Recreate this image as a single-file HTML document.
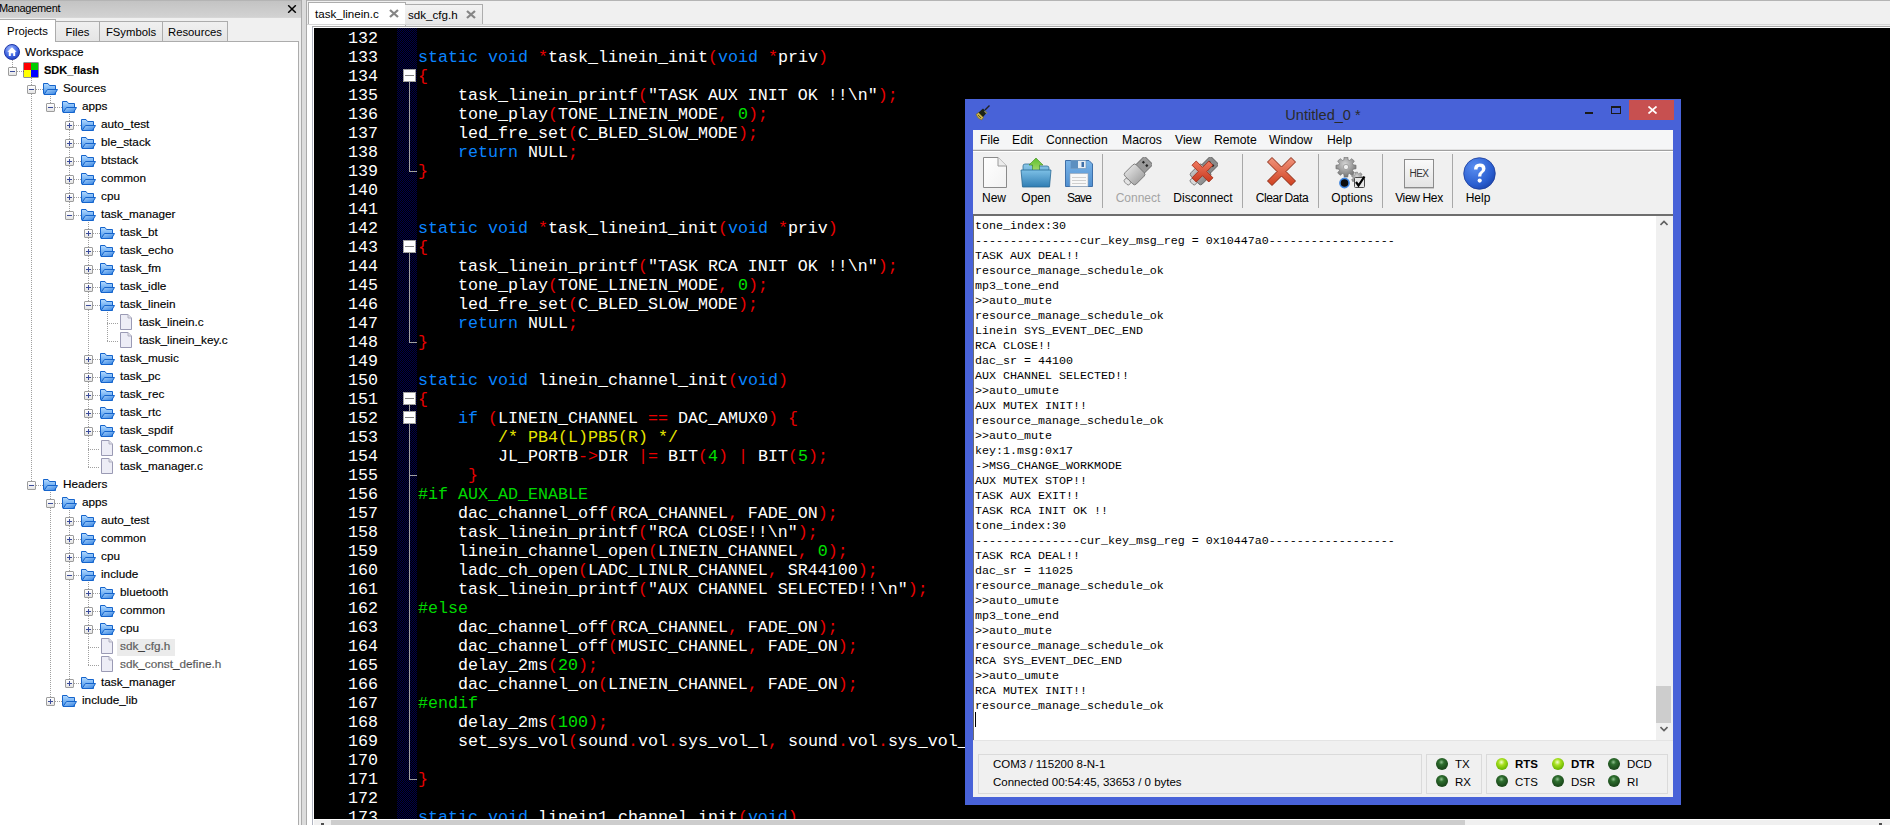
<!DOCTYPE html>
<html><head><meta charset="utf-8">
<style>
*{margin:0;padding:0;box-sizing:border-box}
html,body{width:1890px;height:825px;overflow:hidden;background:#f0f0f0;font-family:"Liberation Sans",sans-serif;color:#000}
.a{position:absolute}
/* left panel */
#lp{position:absolute;left:0;top:0;width:301px;height:825px;background:#f0f0f0;overflow:hidden}
#lph{position:absolute;left:0;top:0;width:301px;height:18px;background:linear-gradient(#b4b4b4 0,#b4b4b4 1px,#c3c3c3 1px,#d2d2d2 17px,#dadada 18px)}
#lph .t{position:absolute;left:-1px;top:1px;font-size:11px;line-height:14px;letter-spacing:-0.3px}
#lph .x{position:absolute;left:287px;top:5px;width:10px;height:8px}
.tab{position:absolute;top:21px;height:21px;border:1px solid #acacac;border-bottom:none;background:linear-gradient(#f0f0f0,#e4e4e4);font-size:11.3px;line-height:20px;text-align:center}
.tab.on{top:19px;height:23px;line-height:22px;background:#fff;z-index:2;border-left:none}
#tree{position:absolute;left:0;top:41px;width:299px;height:784px;background:#fff;border-top:1px solid #acacac;border-right:1px solid #acacac;overflow:hidden}
#tree .in{position:absolute;left:0;top:-42px;width:299px;height:825px}
.tt{position:absolute;font-size:11.75px;line-height:18px;white-space:pre;color:#000;-webkit-text-stroke:0.15px #000}
.tt.b{font-weight:bold;font-size:11px}
.tt.g{color:#6d6d6d}
.sel{position:absolute;background:#ebebeb}
.ic{position:absolute}
.dv{position:absolute;width:1px;background:repeating-linear-gradient(#a0a0a0 0 1px,transparent 1px 2px)}
.dh{position:absolute;height:1px;background:repeating-linear-gradient(90deg,#a0a0a0 0 1px,transparent 1px 2px)}
.exp{position:absolute;width:9px;height:9px;border:1px solid #9d9d9d;border-radius:1px;background:linear-gradient(#fff,#e4e4e4)}
.exp .eh{position:absolute;left:1px;top:3px;width:5px;height:1px;background:#3b4c9b}
.exp .ev{position:absolute;left:3px;top:1px;width:1px;height:5px;background:#3b4c9b}
/* splitter */
#sp{position:absolute;left:301px;top:0;width:6px;height:825px;background:#dcdcdc;border-left:1px solid #aaa;border-right:1px solid #aaa}
/* editor */
#ed{position:absolute;left:307px;top:0;width:1583px;height:825px;background:#f0f0f0}
#edtop{position:absolute;left:0;top:0;width:1583px;height:1px;background:#b4b4b4}
.etab{position:absolute;font-size:11.6px;line-height:20px;white-space:pre}
#code{position:absolute;left:314px;top:28px;width:1576px;height:791px;background:#000;overflow:hidden}
#codefr{position:absolute;left:312px;top:26px;width:1578px;height:799px;border-left:1px solid #b0b4c0;border-top:1px solid #a8a8a8;background:#fff}
#margin{position:absolute;left:397px;top:28px;width:20px;height:791px;background:repeating-conic-gradient(#00004c 0 25%,#000 0 50%) 0 0/2px 2px}
.ln{position:absolute;left:313px;width:65px;text-align:right;font-family:"Liberation Mono",monospace;font-size:16.67px;line-height:19px;color:#fff;white-space:pre}
.cl{position:absolute;left:418px;font-family:"Liberation Mono",monospace;font-size:16.67px;line-height:19px;color:#fff;white-space:pre}
.kw{color:#0a84ff}.op{color:#e80000}.nu{color:#00e000}.pp{color:#00d800}.cm{color:#e6e600}
.fb{position:absolute;left:403px;width:13px;height:13px;background:#fff;border:1px solid #a0a0a0}
.fb i{position:absolute;left:1px;top:5px;width:9px;height:1px;background:#808080}
.fv{position:absolute;left:409px;width:1px;background:#a0a0a0}
.ft{position:absolute;left:409px;width:8px;height:1px;background:#a0a0a0}
#hsb{position:absolute;left:314px;top:820px;width:1576px;height:5px;background:#f0f0f0}
/* terminal window */
#win{position:absolute;left:965px;top:99px;width:716px;height:706px;background:#4862d8}
#wtitle{position:absolute;left:0;top:7px;width:716px;text-align:center;font-size:14.6px;line-height:18px;color:#2a2a2a}
#wclose{position:absolute;left:664px;top:1px;width:45px;height:20px;background:#c75050}
#client{position:absolute;left:8px;top:31px;width:700px;height:667px;background:#f0f0f0;overflow:hidden}
#menu{position:absolute;left:0;top:0;width:700px;height:20px;background:#f5f6f7;border-bottom:1px solid #e1e1e1}
#menu span{position:absolute;top:2px;font-size:12.2px;line-height:16px}
#tbar{position:absolute;left:0;top:20px;width:700px;height:64px;background:#f0f0f0;border-top:1px solid #a0a0a0;box-shadow:inset 0 1px 0 #fff}
.tbl{position:absolute;top:39px;font-size:12px;line-height:16px;white-space:pre}
.tsep{position:absolute;top:3px;width:1px;height:54px;background:#a8a8a8}
#txt{position:absolute;left:0;top:84px;width:700px;height:526px;background:#fff;border-top:2px solid #6e6e6e;border-left:1px solid #6e6e6e}
#txt pre{position:absolute;left:1px;top:3px;font-family:"Liberation Mono",monospace;font-size:11.67px;line-height:15px;color:#000}
#vsb{position:absolute;left:683px;top:86px;width:17px;height:524px;background:#f0f0f0}
#stat{position:absolute;left:0;top:610px;width:700px;height:57px;background:#f0f0f0;border-top:1px solid #e4e4e4}
.sp{position:absolute;top:13px;height:40px;border:1px solid #dadada}
.st{position:absolute;font-size:11.5px;line-height:16px;white-space:pre;margin-top:-1px}
.led{position:absolute;width:12px;height:12px;border-radius:50%;background:radial-gradient(circle at 45% 35%,#8fc08f 0,#2e6e2e 25%,#1e4e1e 60%,#123a12 100%)}
.led.on{background:radial-gradient(circle at 45% 35%,#f4ffd0 0,#a8e020 30%,#6cb800 70%,#4a8a00 100%)}
</style></head><body>
<svg width="0" height="0" style="position:absolute">
<defs>
<linearGradient id="gf" x1="0" y1="0" x2="0" y2="1"><stop offset="0" stop-color="#b5dbff"/><stop offset="1" stop-color="#3b8ce8"/></linearGradient>
<linearGradient id="gf2" x1="0" y1="0" x2="1" y2="1"><stop offset="0" stop-color="#a9d2fb"/><stop offset="1" stop-color="#2f7fe0"/></linearGradient>
<radialGradient id="gws" cx="0.4" cy="0.3" r="0.8"><stop offset="0" stop-color="#9fb8ff"/><stop offset="0.6" stop-color="#3d63e0"/><stop offset="1" stop-color="#1d35b0"/></radialGradient>
</defs></svg>

<!-- LEFT PANEL -->
<div id="lp">
 <div id="lph"><div class="t">Management</div>
  <svg class="x" viewBox="0 0 10 8"><path d="M1.2 0.3 L8.8 7.7 M8.8 0.3 L1.2 7.7" stroke="#000" stroke-width="1.5"/></svg>
 </div>
 <div class="tab" style="left:55px;width:45px">Files</div>
 <div class="tab" style="left:99px;width:64px">FSymbols</div>
 <div class="tab" style="left:162px;width:66px">Resources</div>
 <div class="tab on" style="left:0;width:56px">Projects</div>
 <div id="tree"><div class="in">
<div class="dv" style="left:12px;top:60px;height:11px"></div>
<div class="dv" style="left:31px;top:78px;height:407px"></div>
<div class="dh" style="left:17px;top:71px;width:7px"></div>
<div class="dv" style="left:50px;top:96px;height:11px"></div>
<div class="dh" style="left:36px;top:89px;width:7px"></div>
<div class="dv" style="left:69px;top:114px;height:101px"></div>
<div class="dh" style="left:55px;top:107px;width:7px"></div>
<div class="dh" style="left:74px;top:125px;width:7px"></div>
<div class="dh" style="left:74px;top:143px;width:7px"></div>
<div class="dh" style="left:74px;top:161px;width:7px"></div>
<div class="dh" style="left:74px;top:179px;width:7px"></div>
<div class="dh" style="left:74px;top:197px;width:7px"></div>
<div class="dv" style="left:88px;top:222px;height:245px"></div>
<div class="dh" style="left:74px;top:215px;width:7px"></div>
<div class="dh" style="left:93px;top:233px;width:7px"></div>
<div class="dh" style="left:93px;top:251px;width:7px"></div>
<div class="dh" style="left:93px;top:269px;width:7px"></div>
<div class="dh" style="left:93px;top:287px;width:7px"></div>
<div class="dv" style="left:107px;top:312px;height:29px"></div>
<div class="dh" style="left:93px;top:305px;width:7px"></div>
<div class="dh" style="left:107px;top:323px;width:12px"></div>
<div class="dh" style="left:107px;top:341px;width:12px"></div>
<div class="dh" style="left:93px;top:359px;width:7px"></div>
<div class="dh" style="left:93px;top:377px;width:7px"></div>
<div class="dh" style="left:93px;top:395px;width:7px"></div>
<div class="dh" style="left:93px;top:413px;width:7px"></div>
<div class="dh" style="left:93px;top:431px;width:7px"></div>
<div class="dh" style="left:88px;top:449px;width:12px"></div>
<div class="dh" style="left:88px;top:467px;width:12px"></div>
<div class="dv" style="left:50px;top:492px;height:209px"></div>
<div class="dh" style="left:36px;top:485px;width:7px"></div>
<div class="dv" style="left:69px;top:510px;height:173px"></div>
<div class="dh" style="left:55px;top:503px;width:7px"></div>
<div class="dh" style="left:74px;top:521px;width:7px"></div>
<div class="dh" style="left:74px;top:539px;width:7px"></div>
<div class="dh" style="left:74px;top:557px;width:7px"></div>
<div class="dv" style="left:88px;top:582px;height:83px"></div>
<div class="dh" style="left:74px;top:575px;width:7px"></div>
<div class="dh" style="left:93px;top:593px;width:7px"></div>
<div class="dh" style="left:93px;top:611px;width:7px"></div>
<div class="dh" style="left:93px;top:629px;width:7px"></div>
<div class="dh" style="left:88px;top:647px;width:12px"></div>
<div class="dh" style="left:88px;top:665px;width:12px"></div>
<div class="dh" style="left:74px;top:683px;width:7px"></div>
<div class="dh" style="left:55px;top:701px;width:7px"></div>
<svg class="ic" style="left:4px;top:44px" width="16" height="16" viewBox="0 0 16 16"><circle cx="8" cy="8" r="7.5" fill="url(#gws)" stroke="#2038a8" stroke-width="1"/>
<path d="M8 3.3 L12.6 7.8 H11.2 V12 H9.2 V9.3 H6.8 V12 H4.8 V7.8 H3.4 Z" fill="#fff"/></svg>
<div class="tt" style="left:25px;top:42.5px">Workspace</div>
<div class="exp" style="left:8px;top:67px"><i class="eh"></i></div>
<svg class="ic" style="left:23px;top:62px" width="16" height="16" viewBox="0 0 16 16"><rect x="0.5" y="0.5" width="15" height="15" fill="#222"/>
<rect x="1" y="1" width="7" height="7" fill="#f00"/><rect x="8" y="1" width="7" height="7" fill="#0c0"/>
<rect x="1" y="8" width="7" height="7" fill="#ff0"/><rect x="8" y="8" width="7" height="7" fill="#00f"/></svg>
<div class="tt b" style="left:44px;top:60.5px">SDK_flash</div>
<div class="exp" style="left:27px;top:85px"><i class="eh"></i></div>
<svg class="ic" style="left:42px;top:80px" width="16" height="16" viewBox="0 0 16 16"><path d="M1.5 3.5 H6 L7.5 5.5 H13.5 V14.5 H2.5 L1.5 13.5 Z" fill="url(#gf)" stroke="#1564cc" stroke-width="1"/>
<path d="M2 14.5 L5.5 9.5 H15.5 L12.5 14.5 Z" fill="url(#gf2)" stroke="#1564cc" stroke-width="1"/></svg>
<div class="tt" style="left:63px;top:78.5px">Sources</div>
<div class="exp" style="left:46px;top:103px"><i class="eh"></i></div>
<svg class="ic" style="left:61px;top:98px" width="16" height="16" viewBox="0 0 16 16"><path d="M1.5 3.5 H6 L7.5 5.5 H13.5 V14.5 H2.5 L1.5 13.5 Z" fill="url(#gf)" stroke="#1564cc" stroke-width="1"/>
<path d="M2 14.5 L5.5 9.5 H15.5 L12.5 14.5 Z" fill="url(#gf2)" stroke="#1564cc" stroke-width="1"/></svg>
<div class="tt" style="left:82px;top:96.5px">apps</div>
<div class="exp" style="left:65px;top:121px"><i class="eh"></i><i class="ev"></i></div>
<svg class="ic" style="left:80px;top:116px" width="16" height="16" viewBox="0 0 16 16"><path d="M1.5 3.5 H6 L7.5 5.5 H13.5 V14.5 H2.5 L1.5 13.5 Z" fill="url(#gf)" stroke="#1564cc" stroke-width="1"/>
<path d="M2 14.5 L5.5 9.5 H15.5 L12.5 14.5 Z" fill="url(#gf2)" stroke="#1564cc" stroke-width="1"/></svg>
<div class="tt" style="left:101px;top:114.5px">auto_test</div>
<div class="exp" style="left:65px;top:139px"><i class="eh"></i><i class="ev"></i></div>
<svg class="ic" style="left:80px;top:134px" width="16" height="16" viewBox="0 0 16 16"><path d="M1.5 3.5 H6 L7.5 5.5 H13.5 V14.5 H2.5 L1.5 13.5 Z" fill="url(#gf)" stroke="#1564cc" stroke-width="1"/>
<path d="M2 14.5 L5.5 9.5 H15.5 L12.5 14.5 Z" fill="url(#gf2)" stroke="#1564cc" stroke-width="1"/></svg>
<div class="tt" style="left:101px;top:132.5px">ble_stack</div>
<div class="exp" style="left:65px;top:157px"><i class="eh"></i><i class="ev"></i></div>
<svg class="ic" style="left:80px;top:152px" width="16" height="16" viewBox="0 0 16 16"><path d="M1.5 3.5 H6 L7.5 5.5 H13.5 V14.5 H2.5 L1.5 13.5 Z" fill="url(#gf)" stroke="#1564cc" stroke-width="1"/>
<path d="M2 14.5 L5.5 9.5 H15.5 L12.5 14.5 Z" fill="url(#gf2)" stroke="#1564cc" stroke-width="1"/></svg>
<div class="tt" style="left:101px;top:150.5px">btstack</div>
<div class="exp" style="left:65px;top:175px"><i class="eh"></i><i class="ev"></i></div>
<svg class="ic" style="left:80px;top:170px" width="16" height="16" viewBox="0 0 16 16"><path d="M1.5 3.5 H6 L7.5 5.5 H13.5 V14.5 H2.5 L1.5 13.5 Z" fill="url(#gf)" stroke="#1564cc" stroke-width="1"/>
<path d="M2 14.5 L5.5 9.5 H15.5 L12.5 14.5 Z" fill="url(#gf2)" stroke="#1564cc" stroke-width="1"/></svg>
<div class="tt" style="left:101px;top:168.5px">common</div>
<div class="exp" style="left:65px;top:193px"><i class="eh"></i><i class="ev"></i></div>
<svg class="ic" style="left:80px;top:188px" width="16" height="16" viewBox="0 0 16 16"><path d="M1.5 3.5 H6 L7.5 5.5 H13.5 V14.5 H2.5 L1.5 13.5 Z" fill="url(#gf)" stroke="#1564cc" stroke-width="1"/>
<path d="M2 14.5 L5.5 9.5 H15.5 L12.5 14.5 Z" fill="url(#gf2)" stroke="#1564cc" stroke-width="1"/></svg>
<div class="tt" style="left:101px;top:186.5px">cpu</div>
<div class="exp" style="left:65px;top:211px"><i class="eh"></i></div>
<svg class="ic" style="left:80px;top:206px" width="16" height="16" viewBox="0 0 16 16"><path d="M1.5 3.5 H6 L7.5 5.5 H13.5 V14.5 H2.5 L1.5 13.5 Z" fill="url(#gf)" stroke="#1564cc" stroke-width="1"/>
<path d="M2 14.5 L5.5 9.5 H15.5 L12.5 14.5 Z" fill="url(#gf2)" stroke="#1564cc" stroke-width="1"/></svg>
<div class="tt" style="left:101px;top:204.5px">task_manager</div>
<div class="exp" style="left:84px;top:229px"><i class="eh"></i><i class="ev"></i></div>
<svg class="ic" style="left:99px;top:224px" width="16" height="16" viewBox="0 0 16 16"><path d="M1.5 3.5 H6 L7.5 5.5 H13.5 V14.5 H2.5 L1.5 13.5 Z" fill="url(#gf)" stroke="#1564cc" stroke-width="1"/>
<path d="M2 14.5 L5.5 9.5 H15.5 L12.5 14.5 Z" fill="url(#gf2)" stroke="#1564cc" stroke-width="1"/></svg>
<div class="tt" style="left:120px;top:222.5px">task_bt</div>
<div class="exp" style="left:84px;top:247px"><i class="eh"></i><i class="ev"></i></div>
<svg class="ic" style="left:99px;top:242px" width="16" height="16" viewBox="0 0 16 16"><path d="M1.5 3.5 H6 L7.5 5.5 H13.5 V14.5 H2.5 L1.5 13.5 Z" fill="url(#gf)" stroke="#1564cc" stroke-width="1"/>
<path d="M2 14.5 L5.5 9.5 H15.5 L12.5 14.5 Z" fill="url(#gf2)" stroke="#1564cc" stroke-width="1"/></svg>
<div class="tt" style="left:120px;top:240.5px">task_echo</div>
<div class="exp" style="left:84px;top:265px"><i class="eh"></i><i class="ev"></i></div>
<svg class="ic" style="left:99px;top:260px" width="16" height="16" viewBox="0 0 16 16"><path d="M1.5 3.5 H6 L7.5 5.5 H13.5 V14.5 H2.5 L1.5 13.5 Z" fill="url(#gf)" stroke="#1564cc" stroke-width="1"/>
<path d="M2 14.5 L5.5 9.5 H15.5 L12.5 14.5 Z" fill="url(#gf2)" stroke="#1564cc" stroke-width="1"/></svg>
<div class="tt" style="left:120px;top:258.5px">task_fm</div>
<div class="exp" style="left:84px;top:283px"><i class="eh"></i><i class="ev"></i></div>
<svg class="ic" style="left:99px;top:278px" width="16" height="16" viewBox="0 0 16 16"><path d="M1.5 3.5 H6 L7.5 5.5 H13.5 V14.5 H2.5 L1.5 13.5 Z" fill="url(#gf)" stroke="#1564cc" stroke-width="1"/>
<path d="M2 14.5 L5.5 9.5 H15.5 L12.5 14.5 Z" fill="url(#gf2)" stroke="#1564cc" stroke-width="1"/></svg>
<div class="tt" style="left:120px;top:276.5px">task_idle</div>
<div class="exp" style="left:84px;top:301px"><i class="eh"></i></div>
<svg class="ic" style="left:99px;top:296px" width="16" height="16" viewBox="0 0 16 16"><path d="M1.5 3.5 H6 L7.5 5.5 H13.5 V14.5 H2.5 L1.5 13.5 Z" fill="url(#gf)" stroke="#1564cc" stroke-width="1"/>
<path d="M2 14.5 L5.5 9.5 H15.5 L12.5 14.5 Z" fill="url(#gf2)" stroke="#1564cc" stroke-width="1"/></svg>
<div class="tt" style="left:120px;top:294.5px">task_linein</div>
<svg class="ic" style="left:117px;top:314px" width="16" height="16" viewBox="0 0 16 16"><path d="M3.5 0.5 H11 L14.5 4 V15.5 H3.5 Z" fill="#ededf6" stroke="#9a9ab4"/>
<path d="M11 0.5 V4 H14.5" fill="#e0e0ea" stroke="#b0b0c0"/></svg>
<div class="tt" style="left:139px;top:312.5px">task_linein.c</div>
<svg class="ic" style="left:117px;top:332px" width="16" height="16" viewBox="0 0 16 16"><path d="M3.5 0.5 H11 L14.5 4 V15.5 H3.5 Z" fill="#ededf6" stroke="#9a9ab4"/>
<path d="M11 0.5 V4 H14.5" fill="#e0e0ea" stroke="#b0b0c0"/></svg>
<div class="tt" style="left:139px;top:330.5px">task_linein_key.c</div>
<div class="exp" style="left:84px;top:355px"><i class="eh"></i><i class="ev"></i></div>
<svg class="ic" style="left:99px;top:350px" width="16" height="16" viewBox="0 0 16 16"><path d="M1.5 3.5 H6 L7.5 5.5 H13.5 V14.5 H2.5 L1.5 13.5 Z" fill="url(#gf)" stroke="#1564cc" stroke-width="1"/>
<path d="M2 14.5 L5.5 9.5 H15.5 L12.5 14.5 Z" fill="url(#gf2)" stroke="#1564cc" stroke-width="1"/></svg>
<div class="tt" style="left:120px;top:348.5px">task_music</div>
<div class="exp" style="left:84px;top:373px"><i class="eh"></i><i class="ev"></i></div>
<svg class="ic" style="left:99px;top:368px" width="16" height="16" viewBox="0 0 16 16"><path d="M1.5 3.5 H6 L7.5 5.5 H13.5 V14.5 H2.5 L1.5 13.5 Z" fill="url(#gf)" stroke="#1564cc" stroke-width="1"/>
<path d="M2 14.5 L5.5 9.5 H15.5 L12.5 14.5 Z" fill="url(#gf2)" stroke="#1564cc" stroke-width="1"/></svg>
<div class="tt" style="left:120px;top:366.5px">task_pc</div>
<div class="exp" style="left:84px;top:391px"><i class="eh"></i><i class="ev"></i></div>
<svg class="ic" style="left:99px;top:386px" width="16" height="16" viewBox="0 0 16 16"><path d="M1.5 3.5 H6 L7.5 5.5 H13.5 V14.5 H2.5 L1.5 13.5 Z" fill="url(#gf)" stroke="#1564cc" stroke-width="1"/>
<path d="M2 14.5 L5.5 9.5 H15.5 L12.5 14.5 Z" fill="url(#gf2)" stroke="#1564cc" stroke-width="1"/></svg>
<div class="tt" style="left:120px;top:384.5px">task_rec</div>
<div class="exp" style="left:84px;top:409px"><i class="eh"></i><i class="ev"></i></div>
<svg class="ic" style="left:99px;top:404px" width="16" height="16" viewBox="0 0 16 16"><path d="M1.5 3.5 H6 L7.5 5.5 H13.5 V14.5 H2.5 L1.5 13.5 Z" fill="url(#gf)" stroke="#1564cc" stroke-width="1"/>
<path d="M2 14.5 L5.5 9.5 H15.5 L12.5 14.5 Z" fill="url(#gf2)" stroke="#1564cc" stroke-width="1"/></svg>
<div class="tt" style="left:120px;top:402.5px">task_rtc</div>
<div class="exp" style="left:84px;top:427px"><i class="eh"></i><i class="ev"></i></div>
<svg class="ic" style="left:99px;top:422px" width="16" height="16" viewBox="0 0 16 16"><path d="M1.5 3.5 H6 L7.5 5.5 H13.5 V14.5 H2.5 L1.5 13.5 Z" fill="url(#gf)" stroke="#1564cc" stroke-width="1"/>
<path d="M2 14.5 L5.5 9.5 H15.5 L12.5 14.5 Z" fill="url(#gf2)" stroke="#1564cc" stroke-width="1"/></svg>
<div class="tt" style="left:120px;top:420.5px">task_spdif</div>
<svg class="ic" style="left:98px;top:440px" width="16" height="16" viewBox="0 0 16 16"><path d="M3.5 0.5 H11 L14.5 4 V15.5 H3.5 Z" fill="#ededf6" stroke="#9a9ab4"/>
<path d="M11 0.5 V4 H14.5" fill="#e0e0ea" stroke="#b0b0c0"/></svg>
<div class="tt" style="left:120px;top:438.5px">task_common.c</div>
<svg class="ic" style="left:98px;top:458px" width="16" height="16" viewBox="0 0 16 16"><path d="M3.5 0.5 H11 L14.5 4 V15.5 H3.5 Z" fill="#ededf6" stroke="#9a9ab4"/>
<path d="M11 0.5 V4 H14.5" fill="#e0e0ea" stroke="#b0b0c0"/></svg>
<div class="tt" style="left:120px;top:456.5px">task_manager.c</div>
<div class="exp" style="left:27px;top:481px"><i class="eh"></i></div>
<svg class="ic" style="left:42px;top:476px" width="16" height="16" viewBox="0 0 16 16"><path d="M1.5 3.5 H6 L7.5 5.5 H13.5 V14.5 H2.5 L1.5 13.5 Z" fill="url(#gf)" stroke="#1564cc" stroke-width="1"/>
<path d="M2 14.5 L5.5 9.5 H15.5 L12.5 14.5 Z" fill="url(#gf2)" stroke="#1564cc" stroke-width="1"/></svg>
<div class="tt" style="left:63px;top:474.5px">Headers</div>
<div class="exp" style="left:46px;top:499px"><i class="eh"></i></div>
<svg class="ic" style="left:61px;top:494px" width="16" height="16" viewBox="0 0 16 16"><path d="M1.5 3.5 H6 L7.5 5.5 H13.5 V14.5 H2.5 L1.5 13.5 Z" fill="url(#gf)" stroke="#1564cc" stroke-width="1"/>
<path d="M2 14.5 L5.5 9.5 H15.5 L12.5 14.5 Z" fill="url(#gf2)" stroke="#1564cc" stroke-width="1"/></svg>
<div class="tt" style="left:82px;top:492.5px">apps</div>
<div class="exp" style="left:65px;top:517px"><i class="eh"></i><i class="ev"></i></div>
<svg class="ic" style="left:80px;top:512px" width="16" height="16" viewBox="0 0 16 16"><path d="M1.5 3.5 H6 L7.5 5.5 H13.5 V14.5 H2.5 L1.5 13.5 Z" fill="url(#gf)" stroke="#1564cc" stroke-width="1"/>
<path d="M2 14.5 L5.5 9.5 H15.5 L12.5 14.5 Z" fill="url(#gf2)" stroke="#1564cc" stroke-width="1"/></svg>
<div class="tt" style="left:101px;top:510.5px">auto_test</div>
<div class="exp" style="left:65px;top:535px"><i class="eh"></i><i class="ev"></i></div>
<svg class="ic" style="left:80px;top:530px" width="16" height="16" viewBox="0 0 16 16"><path d="M1.5 3.5 H6 L7.5 5.5 H13.5 V14.5 H2.5 L1.5 13.5 Z" fill="url(#gf)" stroke="#1564cc" stroke-width="1"/>
<path d="M2 14.5 L5.5 9.5 H15.5 L12.5 14.5 Z" fill="url(#gf2)" stroke="#1564cc" stroke-width="1"/></svg>
<div class="tt" style="left:101px;top:528.5px">common</div>
<div class="exp" style="left:65px;top:553px"><i class="eh"></i><i class="ev"></i></div>
<svg class="ic" style="left:80px;top:548px" width="16" height="16" viewBox="0 0 16 16"><path d="M1.5 3.5 H6 L7.5 5.5 H13.5 V14.5 H2.5 L1.5 13.5 Z" fill="url(#gf)" stroke="#1564cc" stroke-width="1"/>
<path d="M2 14.5 L5.5 9.5 H15.5 L12.5 14.5 Z" fill="url(#gf2)" stroke="#1564cc" stroke-width="1"/></svg>
<div class="tt" style="left:101px;top:546.5px">cpu</div>
<div class="exp" style="left:65px;top:571px"><i class="eh"></i></div>
<svg class="ic" style="left:80px;top:566px" width="16" height="16" viewBox="0 0 16 16"><path d="M1.5 3.5 H6 L7.5 5.5 H13.5 V14.5 H2.5 L1.5 13.5 Z" fill="url(#gf)" stroke="#1564cc" stroke-width="1"/>
<path d="M2 14.5 L5.5 9.5 H15.5 L12.5 14.5 Z" fill="url(#gf2)" stroke="#1564cc" stroke-width="1"/></svg>
<div class="tt" style="left:101px;top:564.5px">include</div>
<div class="exp" style="left:84px;top:589px"><i class="eh"></i><i class="ev"></i></div>
<svg class="ic" style="left:99px;top:584px" width="16" height="16" viewBox="0 0 16 16"><path d="M1.5 3.5 H6 L7.5 5.5 H13.5 V14.5 H2.5 L1.5 13.5 Z" fill="url(#gf)" stroke="#1564cc" stroke-width="1"/>
<path d="M2 14.5 L5.5 9.5 H15.5 L12.5 14.5 Z" fill="url(#gf2)" stroke="#1564cc" stroke-width="1"/></svg>
<div class="tt" style="left:120px;top:582.5px">bluetooth</div>
<div class="exp" style="left:84px;top:607px"><i class="eh"></i><i class="ev"></i></div>
<svg class="ic" style="left:99px;top:602px" width="16" height="16" viewBox="0 0 16 16"><path d="M1.5 3.5 H6 L7.5 5.5 H13.5 V14.5 H2.5 L1.5 13.5 Z" fill="url(#gf)" stroke="#1564cc" stroke-width="1"/>
<path d="M2 14.5 L5.5 9.5 H15.5 L12.5 14.5 Z" fill="url(#gf2)" stroke="#1564cc" stroke-width="1"/></svg>
<div class="tt" style="left:120px;top:600.5px">common</div>
<div class="exp" style="left:84px;top:625px"><i class="eh"></i><i class="ev"></i></div>
<svg class="ic" style="left:99px;top:620px" width="16" height="16" viewBox="0 0 16 16"><path d="M1.5 3.5 H6 L7.5 5.5 H13.5 V14.5 H2.5 L1.5 13.5 Z" fill="url(#gf)" stroke="#1564cc" stroke-width="1"/>
<path d="M2 14.5 L5.5 9.5 H15.5 L12.5 14.5 Z" fill="url(#gf2)" stroke="#1564cc" stroke-width="1"/></svg>
<div class="tt" style="left:120px;top:618.5px">cpu</div>
<svg class="ic" style="left:98px;top:638px" width="16" height="16" viewBox="0 0 16 16"><path d="M3.5 0.5 H11 L14.5 4 V15.5 H3.5 Z" fill="#ededf6" stroke="#9a9ab4"/>
<path d="M11 0.5 V4 H14.5" fill="#e0e0ea" stroke="#b0b0c0"/></svg>
<div class="sel" style="left:117px;top:639px;width:58px;height:17px"></div>
<div class="tt g" style="left:120px;top:636.5px">sdk_cfg.h</div>
<svg class="ic" style="left:98px;top:656px" width="16" height="16" viewBox="0 0 16 16"><path d="M3.5 0.5 H11 L14.5 4 V15.5 H3.5 Z" fill="#ededf6" stroke="#9a9ab4"/>
<path d="M11 0.5 V4 H14.5" fill="#e0e0ea" stroke="#b0b0c0"/></svg>
<div class="tt g" style="left:120px;top:654.5px">sdk_const_define.h</div>
<div class="exp" style="left:65px;top:679px"><i class="eh"></i><i class="ev"></i></div>
<svg class="ic" style="left:80px;top:674px" width="16" height="16" viewBox="0 0 16 16"><path d="M1.5 3.5 H6 L7.5 5.5 H13.5 V14.5 H2.5 L1.5 13.5 Z" fill="url(#gf)" stroke="#1564cc" stroke-width="1"/>
<path d="M2 14.5 L5.5 9.5 H15.5 L12.5 14.5 Z" fill="url(#gf2)" stroke="#1564cc" stroke-width="1"/></svg>
<div class="tt" style="left:101px;top:672.5px">task_manager</div>
<div class="exp" style="left:46px;top:697px"><i class="eh"></i><i class="ev"></i></div>
<svg class="ic" style="left:61px;top:692px" width="16" height="16" viewBox="0 0 16 16"><path d="M1.5 3.5 H6 L7.5 5.5 H13.5 V14.5 H2.5 L1.5 13.5 Z" fill="url(#gf)" stroke="#1564cc" stroke-width="1"/>
<path d="M2 14.5 L5.5 9.5 H15.5 L12.5 14.5 Z" fill="url(#gf2)" stroke="#1564cc" stroke-width="1"/></svg>
<div class="tt" style="left:82px;top:690.5px">include_lib</div>
 </div></div>
</div>
<div id="sp"></div>

<!-- EDITOR -->
<div id="ed">
 <div id="edtop"></div>
</div>
<div class="a" style="left:308px;top:2px;width:98px;height:24px;background:#fff;border:1px solid #adadad;border-bottom:none"></div>
<div class="a" style="left:405px;top:4px;width:78px;height:21px;background:linear-gradient(#f3f3f3,#e6e6e6);border:1px solid #adadad;border-bottom:none;border-left:none"></div>
<div class="a" style="left:307px;top:24px;width:1583px;height:1px;background:#d6d6d6"></div>
<div class="etab" style="left:315px;top:4px">task_linein.c</div>
<svg class="a" style="left:389px;top:9px" width="10" height="9"><path d="M1 1 L9 8 M9 1 L1 8" stroke="#858585" stroke-width="2.3"/></svg>
<div class="etab" style="left:408px;top:5px">sdk_cfg.h</div>
<svg class="a" style="left:466px;top:10px" width="10" height="9"><path d="M1 1 L9 8 M9 1 L1 8" stroke="#858585" stroke-width="2.3"/></svg>
<div class="a" style="left:307px;top:25px;width:5px;height:800px;background:#fff"></div>
<div id="codefr"></div>
<div id="code"></div>
<div id="margin"></div>
<div class="ln" style="top:28.5px">132</div>
<div class="ln" style="top:47.5px">133</div>
<div class="ln" style="top:66.5px">134</div>
<div class="ln" style="top:85.5px">135</div>
<div class="ln" style="top:104.5px">136</div>
<div class="ln" style="top:123.5px">137</div>
<div class="ln" style="top:142.5px">138</div>
<div class="ln" style="top:161.5px">139</div>
<div class="ln" style="top:180.5px">140</div>
<div class="ln" style="top:199.5px">141</div>
<div class="ln" style="top:218.5px">142</div>
<div class="ln" style="top:237.5px">143</div>
<div class="ln" style="top:256.5px">144</div>
<div class="ln" style="top:275.5px">145</div>
<div class="ln" style="top:294.5px">146</div>
<div class="ln" style="top:313.5px">147</div>
<div class="ln" style="top:332.5px">148</div>
<div class="ln" style="top:351.5px">149</div>
<div class="ln" style="top:370.5px">150</div>
<div class="ln" style="top:389.5px">151</div>
<div class="ln" style="top:408.5px">152</div>
<div class="ln" style="top:427.5px">153</div>
<div class="ln" style="top:446.5px">154</div>
<div class="ln" style="top:465.5px">155</div>
<div class="ln" style="top:484.5px">156</div>
<div class="ln" style="top:503.5px">157</div>
<div class="ln" style="top:522.5px">158</div>
<div class="ln" style="top:541.5px">159</div>
<div class="ln" style="top:560.5px">160</div>
<div class="ln" style="top:579.5px">161</div>
<div class="ln" style="top:598.5px">162</div>
<div class="ln" style="top:617.5px">163</div>
<div class="ln" style="top:636.5px">164</div>
<div class="ln" style="top:655.5px">165</div>
<div class="ln" style="top:674.5px">166</div>
<div class="ln" style="top:693.5px">167</div>
<div class="ln" style="top:712.5px">168</div>
<div class="ln" style="top:731.5px">169</div>
<div class="ln" style="top:750.5px">170</div>
<div class="ln" style="top:769.5px">171</div>
<div class="ln" style="top:788.5px">172</div>
<div class="ln" style="top:807.5px">173</div>
<div class="fb" style="top:69px"><i></i></div>
<div class="fv" style="top:82px;height:90px"></div>
<div class="ft" style="top:171px"></div>
<div class="fb" style="top:240px"><i></i></div>
<div class="fv" style="top:253px;height:90px"></div>
<div class="ft" style="top:342px"></div>
<div class="fb" style="top:392px"><i></i></div>
<div class="fb" style="top:411px"><i></i></div>
<div class="fv" style="top:405px;height:6px"></div>
<div class="fv" style="top:424px;height:356px"></div>
<div class="ft" style="top:475px"></div>
<div class="ft" style="top:779px"></div>
<div class="cl" style="top:47.5px"><span class="kw">static</span> <span class="kw">void</span> <span class="op">*</span>task_linein_init<span class="op">(</span><span class="kw">void</span> <span class="op">*</span>priv<span class="op">)</span></div>
<div class="cl" style="top:66.5px"><span class="op">{</span></div>
<div class="cl" style="top:85.5px">    task_linein_printf<span class="op">(</span>&quot;TASK AUX INIT OK !!\n&quot;<span class="op">)</span><span class="op">;</span></div>
<div class="cl" style="top:104.5px">    tone_play<span class="op">(</span>TONE_LINEIN_MODE<span class="op">,</span> <span class="nu">0</span><span class="op">)</span><span class="op">;</span></div>
<div class="cl" style="top:123.5px">    led_fre_set<span class="op">(</span>C_BLED_SLOW_MODE<span class="op">)</span><span class="op">;</span></div>
<div class="cl" style="top:142.5px">    <span class="kw">return</span> NULL<span class="op">;</span></div>
<div class="cl" style="top:161.5px"><span class="op">}</span></div>
<div class="cl" style="top:218.5px"><span class="kw">static</span> <span class="kw">void</span> <span class="op">*</span>task_linein1_init<span class="op">(</span><span class="kw">void</span> <span class="op">*</span>priv<span class="op">)</span></div>
<div class="cl" style="top:237.5px"><span class="op">{</span></div>
<div class="cl" style="top:256.5px">    task_linein_printf<span class="op">(</span>&quot;TASK RCA INIT OK !!\n&quot;<span class="op">)</span><span class="op">;</span></div>
<div class="cl" style="top:275.5px">    tone_play<span class="op">(</span>TONE_LINEIN_MODE<span class="op">,</span> <span class="nu">0</span><span class="op">)</span><span class="op">;</span></div>
<div class="cl" style="top:294.5px">    led_fre_set<span class="op">(</span>C_BLED_SLOW_MODE<span class="op">)</span><span class="op">;</span></div>
<div class="cl" style="top:313.5px">    <span class="kw">return</span> NULL<span class="op">;</span></div>
<div class="cl" style="top:332.5px"><span class="op">}</span></div>
<div class="cl" style="top:370.5px"><span class="kw">static</span> <span class="kw">void</span> linein_channel_init<span class="op">(</span><span class="kw">void</span><span class="op">)</span></div>
<div class="cl" style="top:389.5px"><span class="op">{</span></div>
<div class="cl" style="top:408.5px">    <span class="kw">if</span> <span class="op">(</span>LINEIN_CHANNEL <span class="op">=</span><span class="op">=</span> DAC_AMUX0<span class="op">)</span> <span class="op">{</span></div>
<div class="cl" style="top:427.5px">        <span class="cm">/* PB4(L)PB5(R) */</span></div>
<div class="cl" style="top:446.5px">        JL_PORTB<span class="op">-</span><span class="op">&gt;</span>DIR <span class="op">|</span><span class="op">=</span> BIT<span class="op">(</span><span class="nu">4</span><span class="op">)</span> <span class="op">|</span> BIT<span class="op">(</span><span class="nu">5</span><span class="op">)</span><span class="op">;</span></div>
<div class="cl" style="top:465.5px">     <span class="op">}</span></div>
<div class="cl" style="top:484.5px"><span class="pp">#if AUX_AD_ENABLE</span></div>
<div class="cl" style="top:503.5px">    dac_channel_off<span class="op">(</span>RCA_CHANNEL<span class="op">,</span> FADE_ON<span class="op">)</span><span class="op">;</span></div>
<div class="cl" style="top:522.5px">    task_linein_printf<span class="op">(</span>&quot;RCA CLOSE!!\n&quot;<span class="op">)</span><span class="op">;</span></div>
<div class="cl" style="top:541.5px">    linein_channel_open<span class="op">(</span>LINEIN_CHANNEL<span class="op">,</span> <span class="nu">0</span><span class="op">)</span><span class="op">;</span></div>
<div class="cl" style="top:560.5px">    ladc_ch_open<span class="op">(</span>LADC_LINLR_CHANNEL<span class="op">,</span> SR44100<span class="op">)</span><span class="op">;</span></div>
<div class="cl" style="top:579.5px">    task_linein_printf<span class="op">(</span>&quot;AUX CHANNEL SELECTED!!\n&quot;<span class="op">)</span><span class="op">;</span></div>
<div class="cl" style="top:598.5px"><span class="pp">#else</span></div>
<div class="cl" style="top:617.5px">    dac_channel_off<span class="op">(</span>RCA_CHANNEL<span class="op">,</span> FADE_ON<span class="op">)</span><span class="op">;</span></div>
<div class="cl" style="top:636.5px">    dac_channel_off<span class="op">(</span>MUSIC_CHANNEL<span class="op">,</span> FADE_ON<span class="op">)</span><span class="op">;</span></div>
<div class="cl" style="top:655.5px">    delay_2ms<span class="op">(</span><span class="nu">20</span><span class="op">)</span><span class="op">;</span></div>
<div class="cl" style="top:674.5px">    dac_channel_on<span class="op">(</span>LINEIN_CHANNEL<span class="op">,</span> FADE_ON<span class="op">)</span><span class="op">;</span></div>
<div class="cl" style="top:693.5px"><span class="pp">#endif</span></div>
<div class="cl" style="top:712.5px">    delay_2ms<span class="op">(</span><span class="nu">100</span><span class="op">)</span><span class="op">;</span></div>
<div class="cl" style="top:731.5px">    set_sys_vol<span class="op">(</span>sound<span class="op">.</span>vol<span class="op">.</span>sys_vol_l<span class="op">,</span> sound<span class="op">.</span>vol<span class="op">.</span>sys_vol_r<span class="op">)</span><span class="op">;</span></div>
<div class="cl" style="top:769.5px"><span class="op">}</span></div>
<div class="cl" style="top:807.5px"><span class="kw">static</span> <span class="kw">void</span> linein1_channel_init<span class="op">(</span><span class="kw">void</span><span class="op">)</span></div>
<div id="hsb">
 <div class="a" style="left:17px;top:0;width:1134px;height:5px;background:#cdcdcd"></div>
 <div class="a" style="left:7px;top:3px;width:3px;height:2px;background:#505050"></div>
 <div class="a" style="left:1565px;top:3px;width:3px;height:2px;background:#505050"></div>
</div>
<div class="a" style="left:314px;top:819px;width:1576px;height:1px;background:#fff"></div>

<!-- TERMINAL WINDOW -->
<div id="win">
 <svg class="a" style="left:9px;top:5px" width="18" height="18" viewBox="0 0 18 18">
  <path d="M15.5 1.5 L11 6" stroke="#222" stroke-width="1.4"/>
  <path d="M4 9 L9 4.5 L13 8.5 L8.5 13.5 Z" fill="#1c2318"/>
  <path d="M11 6.5 L13.5 9 L12.5 10 L10 7.5 Z" fill="#8a8a6a"/>
  <path d="M2 10.5 L4.5 8.5 L9.5 13.5 L7.5 16 Q4 15 2 10.5 Z" fill="#c7b04a" stroke="#6a5a20" stroke-width="0.6"/>
  <path d="M4 11 L7 14" stroke="#6a5a20" stroke-width="1"/>
 </svg>
 <div id="wtitle">Untitled_0 *</div>
 <div class="a" style="left:620px;top:13px;width:8px;height:2px;background:#1a1a1a"></div>
 <div class="a" style="left:646px;top:7px;width:10px;height:8px;border:1px solid #1a1a1a;border-top-width:2px"></div>
 <div id="wclose"><svg class="a" style="left:19px;top:6px" width="9" height="8"><path d="M0.5 0.5 L8.5 7.5 M8.5 0.5 L0.5 7.5" stroke="#fff" stroke-width="1.7"/></svg></div>
 <div id="client">
  <div id="menu">
   <span style="left:7px">File</span><span style="left:39px">Edit</span><span style="left:73px">Connection</span><span style="left:149px">Macros</span><span style="left:202px">View</span><span style="left:241px">Remote</span><span style="left:296px">Window</span><span style="left:354px">Help</span>
  </div>
  <div id="tbar">
<svg class="a" style="left:10px;top:6px" width="24" height="31" viewBox="0 0 24 31">
 <defs><linearGradient id="gnew" x1="0" y1="0" x2="1" y2="1"><stop offset="0" stop-color="#ffffff"/><stop offset="1" stop-color="#f2f2f2"/></linearGradient></defs>
 <path d="M0.5 0.5 H15 L23.5 9 V30.5 H0.5 Z" fill="url(#gnew)" stroke="#8a8a8a"/>
 <path d="M15 0.5 V9 H23.5" fill="#ececec" stroke="#9a9a9a"/>
</svg>
<svg class="a" style="left:47px;top:6px" width="32" height="31" viewBox="0 0 32 31">
 <defs>
  <linearGradient id="gob" x1="0" y1="0" x2="0" y2="1"><stop offset="0" stop-color="#8cc8e8"/><stop offset="1" stop-color="#3d88bb"/></linearGradient>
  <linearGradient id="gof" x1="0" y1="0" x2="0" y2="1"><stop offset="0" stop-color="#7dc0e6"/><stop offset="1" stop-color="#2f7db3"/></linearGradient>
  <linearGradient id="gar" x1="0" y1="0" x2="0" y2="1"><stop offset="0" stop-color="#5cbf2a"/><stop offset="1" stop-color="#a6da6e"/></linearGradient>
 </defs>
 <path d="M3 9 Q3 7 5 7 H11 L12.5 9 H27 Q29 9 29 11 V29 H3 Z" fill="url(#gob)" stroke="#2f6f99" stroke-width="0.8"/>
 <path d="M16 1 L23 8 H19.5 V14 H12.5 V8 H9 Z" fill="url(#gar)" stroke="#3a8a1a" stroke-width="0.6"/>
 <path d="M1 13 H31 L29.5 30 H2.5 Z" fill="url(#gof)" stroke="#2a6a96" stroke-width="0.8"/>
</svg>
<svg class="a" style="left:91px;top:8px" width="30" height="29" viewBox="0 0 30 29">
 <defs><linearGradient id="gsv" x1="0" y1="0" x2="0" y2="1"><stop offset="0" stop-color="#7ab4e8"/><stop offset="1" stop-color="#4f8fd0"/></linearGradient></defs>
 <path d="M1.5 1.5 H25 L28.5 5 V27.5 H1.5 Z" fill="url(#gsv)" stroke="#3e6fa8"/>
 <rect x="7" y="1.5" width="15" height="8" fill="#e8eef4" stroke="#6a8fb4" stroke-width="0.6"/>
 <rect x="7" y="1.5" width="7" height="8" fill="#5c8fc0"/>
 <rect x="17.5" y="3" width="2.5" height="5" fill="#3e6fa8"/>
 <rect x="6" y="14.5" width="18" height="13" fill="#f8f8f8" stroke="#9aa6b4" stroke-width="0.6"/>
 <path d="M8 18.5 H22 M8 21.5 H22 M8 24.5 H22" stroke="#c4c4c4" stroke-width="0.8"/>
</svg>
<div class="tsep" style="left:129px"></div>
<svg class="a" style="left:147px;top:6px" width="32" height="32" viewBox="0 0 32 32">
 <defs><linearGradient id="gus" x1="0" y1="0" x2="1" y2="0"><stop offset="0" stop-color="#dcdcdc"/><stop offset="1" stop-color="#a8a8a8"/></linearGradient></defs>
 <g transform="rotate(45 16 16)">
  <rect x="10" y="-2" width="12" height="13" rx="0.5" fill="#9a9a9a" stroke="#5a5a5a" stroke-width="0.8"/>
  <rect x="12.5" y="2" width="2.2" height="2.2" fill="#222"/><rect x="17.3" y="2" width="2.2" height="2.2" fill="#222"/>
  <rect x="8" y="10" width="16" height="16" rx="2.5" fill="url(#gus)" stroke="#6e6e6e" stroke-width="0.8"/>
  <rect x="12.5" y="26" width="7" height="4.5" rx="2" fill="#e4e4e4" stroke="#7a7a7a" stroke-width="0.8"/>
 </g>
</svg>
<svg class="a" style="left:213px;top:6px" width="32" height="32" viewBox="0 0 32 32">
 <defs><linearGradient id="gus2" x1="0" y1="0" x2="1" y2="0"><stop offset="0" stop-color="#c4c4c4"/><stop offset="1" stop-color="#8a8a8a"/></linearGradient>
 <linearGradient id="grx" x1="0" y1="0" x2="0" y2="1"><stop offset="0" stop-color="#f07a60"/><stop offset="1" stop-color="#c8381e"/></linearGradient></defs>
 <g transform="rotate(45 16 16)">
  <rect x="10" y="-2" width="12" height="13" rx="0.5" fill="#8a8a8a" stroke="#505050" stroke-width="0.8"/>
  <rect x="12.5" y="2" width="2.2" height="2.2" fill="#222"/><rect x="17.3" y="2" width="2.2" height="2.2" fill="#222"/>
  <rect x="8" y="10" width="16" height="16" rx="2.5" fill="url(#gus2)" stroke="#606060" stroke-width="0.8"/>
  <rect x="12.5" y="26" width="7" height="4.5" rx="2" fill="#d8d8d8" stroke="#707070" stroke-width="0.8"/>
 </g>
 <path d="M4 8 L8 4 L14 10 L20 4 L24 8 L18 14 L24 20 L20 24 L14 18 L8 24 L4 20 L10 14 Z" transform="translate(1.8 -0.2) scale(1.05)" fill="url(#grx)" stroke="#a02a14" stroke-width="0.8"/>
</svg>
<div class="tsep" style="left:269px"></div>
<svg class="a" style="left:292px;top:6px" width="33" height="31" viewBox="0 0 33 31">
 <defs><linearGradient id="grx2" x1="0" y1="0" x2="0" y2="1"><stop offset="0" stop-color="#f0947c"/><stop offset="1" stop-color="#d0401f"/></linearGradient></defs>
 <path d="M2.5 5 L7 0.5 L16.5 10 L26 0.5 L30.5 5 L21 14.5 L30.5 24 L26 28.5 L16.5 19 L7 28.5 L2.5 24 L12 14.5 Z" fill="url(#grx2)" stroke="#8a2a14" stroke-width="1"/>
</svg>
<div class="tsep" style="left:345px"></div>
<svg class="a" style="left:362px;top:6px" width="32" height="32" viewBox="0 0 32 32">
 <defs><radialGradient id="ggr" cx="0.45" cy="0.35" r="0.7"><stop offset="0" stop-color="#d4d4d4"/><stop offset="1" stop-color="#6e6e6e"/></radialGradient></defs>
 <path d="M26.55 19.56 L28.38 19.80 L28.38 22.20 L26.55 22.44 L26.15 23.27 L27.11 24.85 L25.22 26.35 L23.90 25.07 L23.00 25.27 L22.37 27.00 L20.02 26.46 L20.20 24.63 L19.47 24.05 L17.73 24.63 L16.68 22.47 L18.22 21.46 L18.22 20.54 L16.68 19.53 L17.73 17.37 L19.47 17.95 L20.20 17.37 L20.02 15.54 L22.37 15.00 L23.00 16.73 L23.90 16.93 L25.22 15.65 L27.11 17.15 L26.15 18.73 Z" fill="url(#ggr)" stroke="#707070" stroke-width="0.5"/>
 <path d="M18.07 7.82 L21.04 8.21 L21.04 11.79 L18.07 12.18 L17.54 13.46 L19.37 15.83 L16.83 18.37 L14.46 16.54 L13.18 17.07 L12.79 20.04 L9.21 20.04 L8.82 17.07 L7.54 16.54 L5.17 18.37 L2.63 15.83 L4.46 13.46 L3.93 12.18 L0.96 11.79 L0.96 8.21 L3.93 7.82 L4.46 6.54 L2.63 4.17 L5.17 1.63 L7.54 3.46 L8.82 2.93 L9.21 -0.04 L12.79 -0.04 L13.18 2.93 L14.46 3.46 L16.83 1.63 L19.37 4.17 L17.54 6.54 Z" fill="url(#ggr)" stroke="#6a6a6a" stroke-width="0.6"/>
 <circle cx="11" cy="10" r="2.6" fill="#f0f0f0" stroke="#707070" stroke-width="0.5"/>
 <circle cx="9.5" cy="26" r="4.6" fill="#0c0c0c" stroke="#3f86e0" stroke-width="1.6"/>
 <rect x="19.5" y="20.5" width="10" height="10" rx="1" fill="#e8e8e8" stroke="#4a4a4a" stroke-width="1"/>
 <path d="M21 25 L23.5 28.5 L29.5 19.5" stroke="#000" stroke-width="2.2" fill="none"/>
</svg>
<div class="tsep" style="left:409px"></div>
<div class="a" style="left:431px;top:8px;width:30px;height:29px;border:1px solid #8c8c8c;background:linear-gradient(#fafafa,#e4e4e4);box-shadow:0 1px 0 #c8c8c8;font-size:10px;line-height:27px;text-align:center;color:#333;letter-spacing:-0.5px">HEX</div>
<div class="tsep" style="left:479px"></div>
<svg class="a" style="left:490px;top:6px" width="33" height="33" viewBox="0 0 33 33">
 <defs><radialGradient id="ghp" cx="0.35" cy="0.3" r="0.8"><stop offset="0" stop-color="#5a8ef0"/><stop offset="0.7" stop-color="#2a5ed0"/><stop offset="1" stop-color="#1a42a8"/></radialGradient></defs>
 <circle cx="16.5" cy="16.5" r="15.8" fill="url(#ghp)" stroke="#1e3f9a" stroke-width="0.8"/>
 <path d="M11 12.5 Q11 6.5 16.8 6.5 Q22.5 6.5 22.5 11.8 Q22.5 14.6 19.6 16.3 Q18.3 17.1 18.3 19.5 H15 Q15 15.8 17.4 14.4 Q19 13.4 19 11.9 Q19 9.7 16.7 9.7 Q14.5 9.7 14.5 12.5 Z" fill="#fff"/>
 <circle cx="16.7" cy="23.6" r="2.1" fill="#fff"/>
</svg>
<div class="tbl" style="left:-1px;width:44px;text-align:center">New</div>
<div class="tbl" style="left:41px;width:44px;text-align:center">Open</div>
<div class="tbl" style="left:84px;width:44px;text-align:center;letter-spacing:-0.8px">Save</div>
<div class="tbl" style="left:130px;width:70px;text-align:center;color:#a4a4a4">Connect</div>
<div class="tbl" style="left:195px;width:70px;text-align:center">Disconnect</div>
<div class="tbl" style="left:274px;width:70px;text-align:center;letter-spacing:-0.45px;word-spacing:-0.5px">Clear Data</div>
<div class="tbl" style="left:344px;width:70px;text-align:center">Options</div>
<div class="tbl" style="left:411px;width:70px;text-align:center;letter-spacing:-0.35px">View Hex</div>
<div class="tbl" style="left:470px;width:70px;text-align:center">Help</div>

  </div>
  <div id="txt"><pre>tone_index:30
---------------cur_key_msg_reg = 0x10447a0------------------
TASK AUX DEAL!!
resource_manage_schedule_ok
mp3_tone_end
&gt;&gt;auto_mute
resource_manage_schedule_ok
Linein SYS_EVENT_DEC_END
RCA CLOSE!!
dac_sr = 44100
AUX CHANNEL SELECTED!!
&gt;&gt;auto_umute
AUX MUTEX INIT!!
resource_manage_schedule_ok
&gt;&gt;auto_mute
key:1.msg:0x17
-&gt;MSG_CHANGE_WORKMODE
AUX MUTEX STOP!!
TASK AUX EXIT!!
TASK RCA INIT OK !!
tone_index:30
---------------cur_key_msg_reg = 0x10447a0------------------
TASK RCA DEAL!!
dac_sr = 11025
resource_manage_schedule_ok
&gt;&gt;auto_umute
mp3_tone_end
&gt;&gt;auto_mute
resource_manage_schedule_ok
RCA SYS_EVENT_DEC_END
&gt;&gt;auto_umute
RCA MUTEX INIT!!
resource_manage_schedule_ok</pre>
   <div class="a" style="left:1px;top:496px;width:1px;height:15px;background:#000"></div>
  </div>
  <div id="vsb">
   <svg class="a" style="left:4px;top:4px" width="8" height="6"><path d="M0.5 5 L4 1.5 L7.5 5" stroke="#606060" stroke-width="1.6" fill="none"/></svg>
   <div class="a" style="left:0;top:470px;width:15px;height:37px;background:#cdcdcd"></div>
   <svg class="a" style="left:4px;top:510px" width="8" height="6"><path d="M0.5 1 L4 4.5 L7.5 1" stroke="#606060" stroke-width="1.6" fill="none"/></svg>
  </div>
  <div id="stat">
   <div class="sp" style="left:5px;width:444px"></div>
   <div class="sp" style="left:453px;width:56px"></div>
   <div class="sp" style="left:513px;width:182px"></div>
   <div class="st" style="left:20px;top:16px">COM3 / 115200 8-N-1</div>
   <div class="st" style="left:20px;top:34px">Connected 00:54:45, 33653 / 0 bytes</div>
   <div class="led" style="left:463px;top:17px"></div><div class="st" style="left:482px;top:16px">TX</div>
   <div class="led" style="left:463px;top:34px"></div><div class="st" style="left:482px;top:34px">RX</div>
   <div class="led on" style="left:523px;top:17px"></div><div class="st" style="left:542px;top:16px;font-weight:bold">RTS</div>
   <div class="led" style="left:523px;top:34px"></div><div class="st" style="left:542px;top:34px">CTS</div>
   <div class="led on" style="left:579px;top:17px"></div><div class="st" style="left:598px;top:16px;font-weight:bold">DTR</div>
   <div class="led" style="left:579px;top:34px"></div><div class="st" style="left:598px;top:34px">DSR</div>
   <div class="led" style="left:635px;top:17px"></div><div class="st" style="left:654px;top:16px">DCD</div>
   <div class="led" style="left:635px;top:34px"></div><div class="st" style="left:654px;top:34px">RI</div>
  </div>
 </div>
</div>
</body></html>
